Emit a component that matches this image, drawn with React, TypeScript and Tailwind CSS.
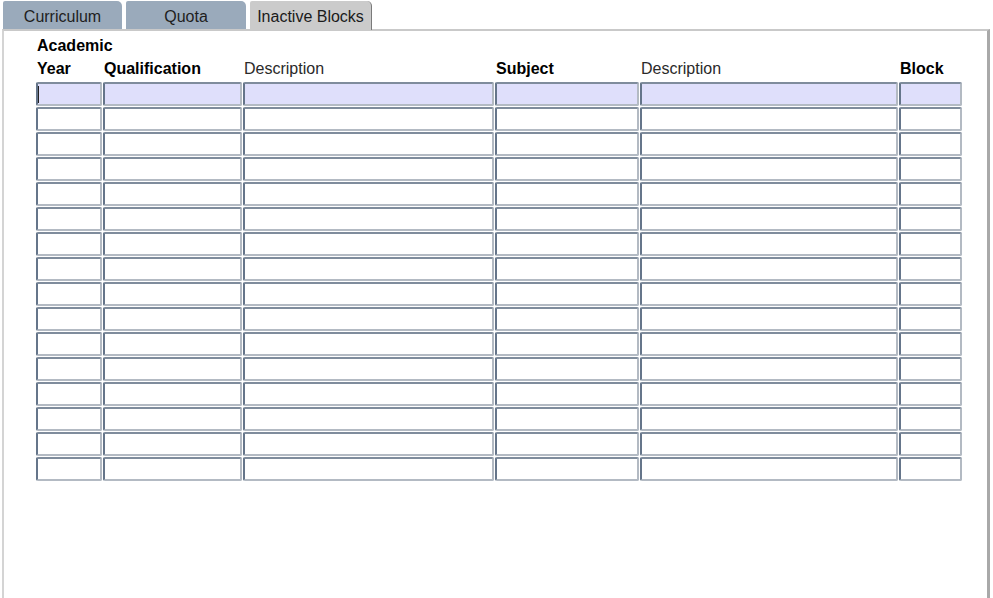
const columns = [
    { label: 'Year', bold: true, width: 'w-[66px]' },
    { label: 'Qualification', bold: true, width: 'w-[139px]' },
    { label: 'Description', bold: false, width: 'w-[251px]' },
    { label: 'Subject', bold: true, width: 'w-[144px]' },
    { label: 'Description', bold: false, width: 'w-[258px]' },
    { label: 'Block', bold: true, width: 'w-[63px]' },
];

const rows = Array.from({ length: 16 }, (_, i) => i);

function Tab({ label, active, width }: { label: string; active?: boolean; width: string }) {
    return (
        <div
            className={
                active
                    ? `${width} h-[29px] mt-[1px] flex items-center justify-center rounded-tr-[5px] rounded-tl-[2px] bg-[#cbcbcb] border-r border-r-[#7a7a7a] text-[#1a1a1a]`
                    : `${width} h-[28px] mt-[1px] flex items-center justify-center rounded-tr-[5px] rounded-tl-[2px] bg-[#9aaabb] text-[#1e1e1e]`
            }
        >
            <span className="pt-[3px]">{label}</span>
        </div>
    );
}

function Cell({ width, selected, cursor }: { width: string; selected?: boolean; cursor?: boolean }) {
    return (
        <div
            className={`${width} h-[24px] relative rounded-[2px] border-2 border-t-[#7f8c9c] border-l-[#65758a] border-b-[#b3bac3] border-r-[#b3bac3] ${
                selected ? 'bg-[#dfdffb]' : 'bg-white'
            }`}
        >
            {cursor && <span className="absolute left-[0px] top-[2px] h-[17px] w-[1px] bg-[#222]" />}
        </div>
    );
}

export default function App() {
    return (
        <div
            className="w-[993px] h-[598px] overflow-hidden bg-white text-[16px] text-black"
            style={{ fontFamily: '"Liberation Sans", Arial, sans-serif' }}
        >
            <div className="flex pl-[3px] gap-[4px] h-[29px]">
                <Tab label="Curriculum" width="w-[119px]" />
                <Tab label="Quota" width="w-[120px]" />
                <Tab label="Inactive Blocks" width="w-[122px]" active />
            </div>

            <div className="ml-[2px] w-[988px] h-[600px] border-t-2 border-t-[#c9c9c9] border-l-2 border-l-[#d4d4d4] border-r-[3px] border-r-[#a9a9a9]">
                <div className="pl-[32px] pt-[6px]">
                    <div className="h-[17px] leading-[17px] font-bold pl-[1px]">Academic</div>
                    <div className="mt-[6px] h-[17px] flex gap-[1px]">
                        {columns.map((c, i) => (
                            <div
                                key={i}
                                className={`${c.width} leading-[17px] pl-[1px] ${c.bold ? 'font-bold' : 'font-normal text-[#2a2a2a]'}`}
                            >
                                {c.label}
                            </div>
                        ))}
                    </div>
                    <div className="mt-[5px] flex flex-col gap-[1px]">
                        {rows.map((r) => (
                            <div key={r} className="flex gap-[1px]">
                                {columns.map((c, i) => (
                                    <Cell key={i} width={c.width} selected={r === 0} cursor={r === 0 && i === 0} />
                                ))}
                            </div>
                        ))}
                    </div>
                </div>
            </div>
        </div>
    );
}
